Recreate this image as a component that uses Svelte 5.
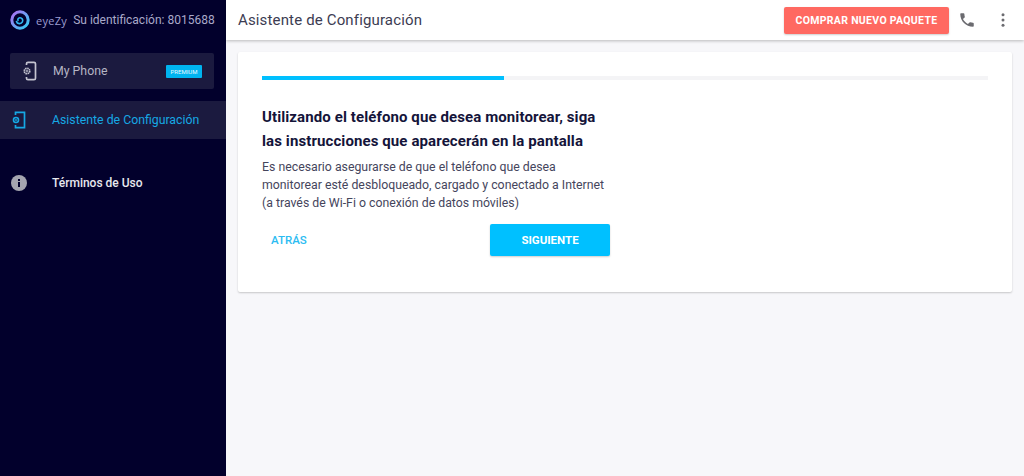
<script lang="ts">
  const lines = [
    "Es necesario asegurarse de que el teléfono que desea",
    "monitorear esté desbloqueado, cargado y conectado a Internet",
    "(a través de Wi-Fi o conexión de datos móviles)"
  ];
</script>

<div class="layout">
  <aside class="sidebar">
    <div class="brand">
      <svg class="logo" width="20" height="20" viewBox="0 0 20 20" fill="none">
        <defs>
          <linearGradient id="lg" x1="0" y1="0" x2="1" y2="1">
            <stop offset="0" stop-color="#b06cf2" />
            <stop offset="1" stop-color="#2fd0f5" />
          </linearGradient>
        </defs>
        <circle cx="10" cy="10" r="8.200" stroke="url(#lg)" stroke-width="3" />
        <path d="M6.500 11.500c.6 2.600 4.600 2.900 5.900.4 1-2-.4-4.300-2.600-4.200-1.500.1-2.300 1.500-1.800 2.700" stroke="#2fb8f0" stroke-width="1.600" stroke-linecap="round" />
      </svg>
      <span class="wordmark">eyeZy</span>
      <span class="ident">Su identificación: 8015688</span>
    </div>

    <div class="phone">
      <svg width="14" height="20" viewBox="0 0 14 20" fill="none" stroke="#c4c4d0" stroke-width="1.700">
        <path d="M3.500 4V2.800q0-1.500 1.500-1.500h6q1.500 0 1.500 1.500v14.400q0 1.500-1.500 1.500H5q-1.500 0-1.500-1.500V16" />
        <circle cx="4" cy="10" r="2.700" fill="#1b1a3f" stroke-width="1.800" stroke-dasharray="1.500 .6" />
        <circle cx="4" cy="10" r=".9" fill="#c4c4d0" stroke="none" />
      </svg>
      <span class="phone-name">My Phone</span>
      <span class="badge">PREMIUM</span>
    </div>

    <nav class="menu">
      <div class="item active">
        <svg width="14" height="20" viewBox="0 0 14 20" fill="none" stroke="#16a8e4" stroke-width="1.700">
          <path d="M3.500 5V2.300h9v15.400h-9V15" />
          <circle cx="4" cy="10" r="2.500" fill="#1b1a3f" stroke-width="1.600" />
          <circle cx="4" cy="10" r=".9" fill="#16a8e4" stroke="none" />
        </svg>
        <span>Asistente de Configuración</span>
      </div>
      <div class="item terms">
        <svg width="16" height="16" viewBox="0 0 16 16">
          <circle cx="8" cy="8" r="8" fill="#a5a5b0" />
          <rect x="7" y="7" width="2" height="5" fill="#02002c" />
          <rect x="7" y="4" width="2" height="2" fill="#02002c" />
        </svg>
        <span>Términos de Uso</span>
      </div>
    </nav>
  </aside>

  <div class="main">
    <header class="topbar">
      <h1>Asistente de Configuración</h1>
      <div class="actions">
        <button class="buy" type="button">COMPRAR NUEVO PAQUETE</button>
        <svg class="phone-icon" width="18" height="18" viewBox="0 0 24 24" fill="#6b6b70">
          <path d="M20 15.500c-1.250 0-2.450-.2-3.570-.57-.35-.11-.74-.03-1.020.24l-2.200 2.200c-2.830-1.440-5.150-3.750-6.590-6.590l2.200-2.210c.28-.26.36-.65.25-1C8.700 6.450 8.500 5.250 8.500 4c0-.55-.45-1-1-1H4c-.55 0-1 .45-1 1 0 9.390 7.610 17 17 17 .55 0 1-.45 1-1v-3.500c0-.55-.45-1-1-1z" />
        </svg>
        <svg width="18" height="18" viewBox="0 0 24 24" fill="#6b6b70">
          <circle cx="12" cy="5" r="2" />
          <circle cx="12" cy="12" r="2" />
          <circle cx="12" cy="19" r="2" />
        </svg>
      </div>
    </header>

    <section class="content">
      <div class="card">
        <div class="progress"><div class="fill" style="width: 33.33%"></div></div>
        <div class="step">
          <h2>Utilizando el teléfono que desea monitorear, siga las instrucciones que aparecerán en la pantalla</h2>
          <p>
            {#each lines as line}
              <span>{line}</span>
            {/each}
          </p>
          <div class="buttons">
            <button class="back" type="button">ATRÁS</button>
            <button class="next" type="button">SIGUIENTE</button>
          </div>
        </div>
      </div>
    </section>
  </div>
</div>

<style>
  :global(body) {
    margin: 0;
    font-family: Roboto, "Liberation Sans", sans-serif;
  }

  .layout {
    display: flex;
    width: 1024px;
    height: 476px;
    overflow: hidden;
    background: #f7f7fa;
  }

  .sidebar {
    width: 226px;
    flex-shrink: 0;
    background: #02002c;
    padding-top: 10px;
    box-sizing: border-box;
  }

  .brand {
    display: flex;
    align-items: center;
    height: 20px;
    padding-left: 10px;
  }

  .wordmark {
    margin-left: 6px;
    font-family: "Open Sans", sans-serif;
    font-size: 11px;
    letter-spacing: 0.3px;
    color: #9d9dd0;
  }

  .ident {
    margin-left: 6px;
    font-size: 12px;
    color: #a9a9c9;
    white-space: nowrap;
  }

  .phone {
    display: flex;
    align-items: center;
    height: 36px;
    margin: 23px 12px 0 10px;
    padding-left: 13px;
    padding-right: 12px;
    background: #1b1a3f;
    border-radius: 2px;
  }

  .phone-name {
    margin-left: 16px;
    font-size: 12.300px;
    color: #b5b5c4;
  }

  .badge {
    margin-left: auto;
    width: 36px;
    height: 13px;
    line-height: 13px;
    text-align: center;
    font-size: 6px;
    color: #e6f8ff;
    background: #00b4f0;
    border-radius: 1px;
  }

  .menu {
    margin-top: 12px;
  }

  .item {
    display: flex;
    align-items: center;
    height: 38px;
    padding-left: 10px;
    font-size: 12.300px;
  }

  .item svg {
    width: 18px;
    margin-right: 24px;
  }

  .active {
    background: #1b1a3f;
    color: #16a8e4;
  }

  .terms {
    margin-top: 25px;
    color: #e8e8ee;
    font-size: 12px;
    font-weight: 500;
  }

  .main {
    flex: 1;
    display: flex;
    flex-direction: column;
    min-width: 0;
  }

  .topbar {
    display: flex;
    align-items: center;
    justify-content: space-between;
    height: 40px;
    padding: 0 12px;
    background: #fff;
    box-shadow: 0 1px 3px rgba(0, 0, 0, 0.25);
  }

  h1 {
    margin: 0;
    font-size: 15px;
    font-weight: 400;
    letter-spacing: 0.15px;
    color: #3c3c52;
  }

  .actions {
    display: flex;
    align-items: center;
  }

  .buy {
    width: 165px;
    height: 27px;
    padding: 0;
    border: none;
    border-radius: 2px;
    background: #ff6961;
    color: #fff;
    font-family: inherit;
    font-size: 10.500px;
    font-weight: 700;
    letter-spacing: 0.3px;
    box-shadow: 0 1px 2px rgba(0, 0, 0, 0.2);
  }

  .phone-icon {
    margin: 0 18px 0 9px;
  }

  .content {
    padding: 12px 12px 0;
  }

  .card {
    height: 240px;
    box-sizing: border-box;
    padding: 24px 24px 0;
    background: #fff;
    border-radius: 2px;
    box-shadow: 0 1px 2px rgba(0, 0, 0, 0.2);
  }

  .progress {
    height: 4px;
    background: #f4f4f6;
  }

  .fill {
    height: 100%;
    background: #00c0ff;
  }

  .step {
    width: 348px;
    margin-top: 25px;
  }

  h2 {
    margin: 0;
    font-size: 15px;
    font-weight: 700;
    letter-spacing: 0.1px;
    line-height: 24px;
    color: #14143a;
  }

  p {
    margin: 5px 0 0;
    font-size: 12.300px;
    line-height: 18px;
    color: #45455c;
  }

  p span {
    display: block;
    white-space: nowrap;
  }

  .buttons {
    display: flex;
    align-items: center;
    justify-content: space-between;
    margin-top: 12px;
  }

  .back {
    padding: 0 9px;
    border: none;
    background: none;
    font-family: inherit;
    font-size: 11.500px;
    font-weight: 500;
    color: #2cbcf2;
  }

  .next {
    width: 120px;
    height: 32px;
    border: none;
    border-radius: 2px;
    background: #00c0ff;
    color: #fff;
    font-family: inherit;
    font-size: 11.500px;
    font-weight: 700;
    box-shadow: 0 1px 2px rgba(0, 0, 0, 0.2);
  }
</style>
